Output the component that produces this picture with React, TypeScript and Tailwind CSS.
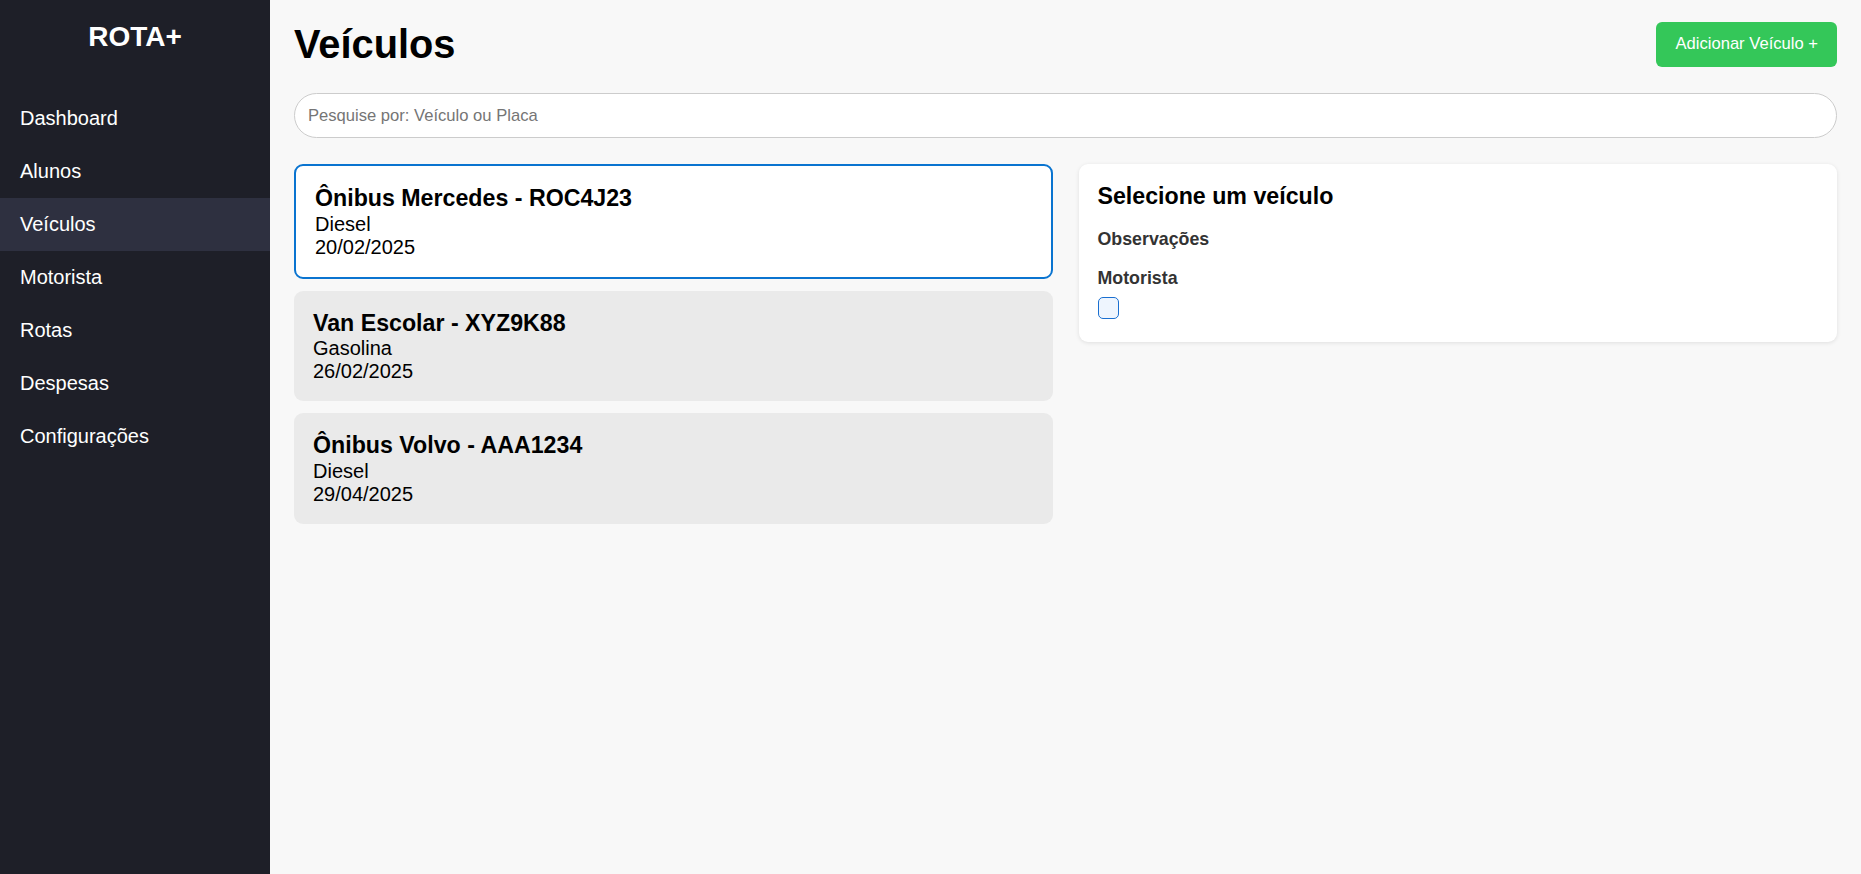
import React, { useState } from "react";

type Veiculo = {
  id: number;
  nome: string;
  placa: string;
  combustivel: string;
  data: string;
};

const veiculos: Veiculo[] = [
  { id: 1, nome: "Ônibus Mercedes", placa: "ROC4J23", combustivel: "Diesel", data: "20/02/2025" },
  { id: 2, nome: "Van Escolar", placa: "XYZ9K88", combustivel: "Gasolina", data: "26/02/2025" },
  { id: 3, nome: "Ônibus Volvo", placa: "AAA1234", combustivel: "Diesel", data: "29/04/2025" },
];

const menu = ["Dashboard", "Alunos", "Veículos", "Motorista", "Rotas", "Despesas", "Configurações"];

const App = () => {
  const [busca, setBusca] = useState("");
  const [selecionado, setSelecionado] = useState(1);

  const lista = veiculos.filter((v) =>
    `${v.nome} ${v.placa}`.toLowerCase().includes(busca.toLowerCase())
  );

  return (
    <div className="flex min-h-screen font-['Liberation_Sans',Arial,sans-serif] text-black">
      <aside className="w-[270px] shrink-0 bg-[#1e1f28] text-white">
        <div className="pt-[21px] text-center text-[28px] font-bold leading-[32px]">
          ROTA+
        </div>
        <nav className="mt-[39px] flex flex-col">
          {menu.map((item) => (
            <a
              key={item}
              className={`px-[20px] py-[15px] text-[20px] leading-[23px] cursor-pointer ${
                item === "Veículos" ? "bg-[#2e3040]" : ""
              }`}
            >
              {item}
            </a>
          ))}
        </nav>
      </aside>

      <main className="flex-1 bg-[#f8f8f8] px-[24px] pt-[22px]">
        <div className="flex h-[45px] items-center justify-between">
          <h1 className="text-[39.8px] font-bold leading-[45px]">Veículos</h1>
          <button className="h-[45px] rounded-[6px] bg-[#34c759] px-[19px] text-[16.6px] text-white">
            Adicionar Veículo +
          </button>
        </div>

        <input
          type="text"
          value={busca}
          onChange={(e) => setBusca(e.target.value)}
          placeholder="Pesquise por: Veículo ou Placa"
          className="mt-[26px] h-[45px] w-full rounded-full border border-[#cccccc] bg-white px-[13px] text-[16.6px] outline-none placeholder:text-[#757575]"
        />

        <div className="mt-[26px] grid grid-cols-2 items-start gap-[26px]">
          <div className="flex flex-col gap-[12px]">
            {lista.map((v) => (
              <div
                key={v.id}
                onClick={() => setSelecionado(v.id)}
                className={`cursor-pointer rounded-[9px] px-[19px] pt-[19px] pb-[18px] ${
                  v.id === selecionado
                    ? "border-2 border-[#0a74d0] bg-white"
                    : "bg-[#eaeaea]"
                }`}
              >
                <h3 className="mb-[1px] text-[23.2px] font-bold leading-[26.5px]">
                  {v.nome} - {v.placa}
                </h3>
                <p className="text-[20px] leading-[23px]">{v.combustivel}</p>
                <p className="text-[20px] leading-[23px]">{v.data}</p>
              </div>
            ))}
          </div>

          <div className="rounded-[9px] bg-white px-[19px] pt-[19px] pb-[23px] shadow-[0_1px_4px_rgba(0,0,0,0.1)]">
            <h2 className="text-[23.2px] font-bold leading-[26.5px]">Selecione um veículo</h2>
            <div className="mt-[19px] text-[17.8px] font-bold leading-[20px] text-[#333333]">
              Observações
            </div>
            <div className="mt-[19px] text-[17.8px] font-bold leading-[20px] text-[#333333]">
              Motorista
            </div>
            <div className="mt-[9px] h-[22px] w-[21px] rounded-[5px] border border-[#1a6fd0] bg-[#eef5fe]" />
          </div>
        </div>
      </main>
    </div>
  );
};

export default App;
